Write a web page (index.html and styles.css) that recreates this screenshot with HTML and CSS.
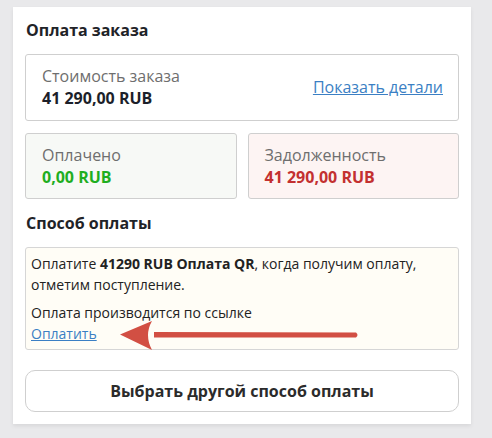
FILE: index.html
```html
<!DOCTYPE html>
<html lang="ru">
<head>
    <meta charset="UTF-8">
    <title>Оплата заказа</title>
    <link rel="stylesheet" href="styles.css">
</head>
<body>
<div class="card">
    <h2 class="title">Оплата заказа</h2>
    <div class="box total">
        <div>
            <div class="label">Стоимость заказа</div>
            <div class="sum">41 290,00 RUB</div>
        </div>
        <a class="link" href="#">Показать детали</a>
    </div>
    <div class="row">
        <div class="box paid">
            <div class="label">Оплачено</div>
            <div class="sum green">0,00 RUB</div>
        </div>
        <div class="box debt">
            <div class="label">Задолженность</div>
            <div class="sum red">41 290,00 RUB</div>
        </div>
    </div>
    <h2 class="title">Способ оплаты</h2>
    <div class="info">
        <p>Оплатите <b>41290 RUB Оплата QR</b>, когда получим оплату, отметим поступление.</p>
        <p>Оплата производится по ссылке<br><a class="link" href="#">Оплатить</a></p>
        <svg class="arrow" width="240" height="34" viewBox="0 0 240 34">
            <path d="M34 12 L236 12.5 Q239 15 236 17.5 L34 17.5 Z" fill="#d24f43"/>
            <path d="M0 14.5 L32 1 Q24 15 32 30 Z" fill="#d24f43"/>
        </svg>
    </div>
    <button class="btn">Выбрать другой способ оплаты</button>
</div>
</body>
</html>
```

FILE: styles.css
```css
*{
    margin: 0;
    padding: 0;
    box-sizing: border-box;
}
body{
    background: #e9e9eb;
    font-family: "Open Sans", "Noto Sans", sans-serif;
    color: #222;
    padding: 7px 21px 14px 13px;
}
.card{
    background: #fff;
    width: 458px;
    padding: 12px;
    box-shadow: 0 2px 4px rgba(0,0,0,.08);
}
.title{
    font-size: 16px;
    font-weight: 700;
    line-height: 22px;
    color: #1f2328;
    margin: 13px 1px;
}
.title:first-child{
    margin-top: 0;
}
.box{
    border: 1px solid #cfcfcf;
    border-radius: 3px;
    padding: 10px 15px 11px 16px;
}
.total{
    display: flex;
    align-items: center;
    justify-content: space-between;
}
.label{
    font-size: 16px;
    line-height: 22px;
    color: #6e6e6e;
}
.sum{
    font-size: 16px;
    font-weight: 700;
    line-height: 22px;
    color: #1c1f2a;
}
.green{
    color: #1fae1f;
}
.red{
    color: #c33030;
}
.link{
    font-size: 16px;
    color: #3b7fc4;
    text-decoration: underline;
}
.row{
    display: flex;
    gap: 11px;
    margin-top: 12px;
}
.row .box{
    flex: 1;
    padding: 10px 15px 10px 16px;
}
.paid{
    background: #f7f9f6;
}
.debt{
    background: #fdf4f3;
}
.info{
    position: relative;
    background: #fffdf6;
    border: 1px solid #d6d6d6;
    border-radius: 3px;
    padding: 5px 6px 5px 5px;
    font-size: 14px;
    line-height: 21px;
    color: #222;
}
.info p + p{
    margin-top: 7px;
}
.info .link{
    font-size: 14px;
}
.arrow{
    position: absolute;
    left: 94px;
    top: 72px;
}
.btn{
    display: block;
    width: 100%;
    height: 42px;
    margin-top: 20px;
    background: #fff;
    border: 1px solid #cfcfcf;
    border-radius: 10px;
    font-family: inherit;
    font-size: 16px;
    font-weight: 700;
    color: #2b2b2b;
}
```
